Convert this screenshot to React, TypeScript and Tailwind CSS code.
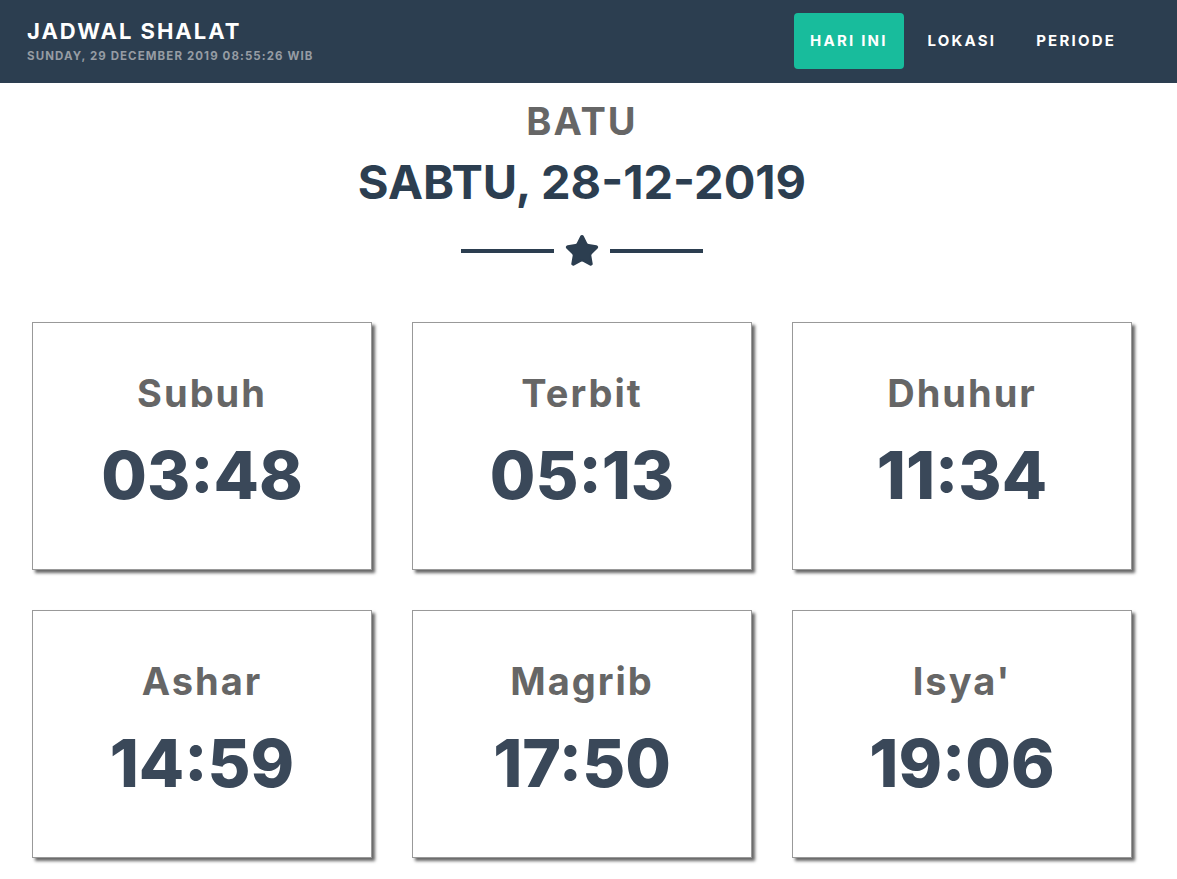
import { Star } from 'lucide-react';

const times = [
  { name: 'Subuh', time: '03:48' },
  { name: 'Terbit', time: '05:13' },
  { name: 'Dhuhur', time: '11:34' },
  { name: 'Ashar', time: '14:59' },
  { name: 'Magrib', time: '17:50' },
  { name: "Isya'", time: '19:06' },
];

export default function App() {
  return (
    <div className="min-h-screen bg-white font-['Inter',sans-serif]">
      <nav className="h-[83px] bg-[#2c3e50] flex items-center justify-between pl-[27px] pr-[45px]">
        <div className="-mt-[1px]">
          <h1 className="text-[22px] font-bold text-white leading-none tracking-[2px]">JADWAL SHALAT</h1>
          <p className="text-[11.5px] font-bold text-[#969ca3] mt-[9px] leading-none tracking-[1.1px]">SUNDAY, 29 DECEMBER 2019 08:55:26 WIB</p>
        </div>
        <ul className="flex gap-2 -mt-[1px]">
          <li className="h-[56px] px-4 flex items-center rounded bg-[#18bc9c] text-white text-[15px] font-bold tracking-[2.2px]">HARI INI</li>
          <li className="h-[56px] px-4 flex items-center text-white text-[15px] font-bold tracking-[2.2px]">LOKASI</li>
          <li className="h-[56px] px-4 flex items-center text-white text-[15px] font-bold tracking-[2.2px]">PERIODE</li>
        </ul>
      </nav>

      <main className="pl-[32px] pb-6">
        <div className="w-[1100px] text-center">
          <h2 className="text-[38px] font-bold text-[#666] leading-none mt-[19px] tracking-[2px]">BATU</h2>
          <h3 className="text-[47px] font-bold text-[#2c3e50] leading-none mt-[18px]">SABTU, 28-12-2019</h3>
          <div className="flex items-center justify-center gap-[10px] mt-[28px]">
            <span className="w-[93px] h-[4px] bg-[#2c3e50]" />
            <Star className="w-[36px] h-[36px] text-[#2c3e50]" fill="currentColor" strokeWidth={1.5} />
            <span className="w-[93px] h-[4px] bg-[#2c3e50]" />
          </div>
        </div>

        <div className="w-[1100px] grid grid-cols-3 gap-x-[40px] gap-y-[40px] mt-[53px]">
          {times.map((t) => (
            <div
              key={t.name}
              className="h-[248px] border border-[#999] bg-white shadow-[3px_3px_3px_#666] flex flex-col items-center pt-[51px]"
            >
              <p className="text-[38px] font-bold text-[#666] leading-none tracking-[2px]">{t.name}</p>
              <p className="text-[66px] font-extrabold text-[#3a4859] leading-none mt-[30px]">{t.time}</p>
            </div>
          ))}
        </div>
      </main>
    </div>
  );
}
